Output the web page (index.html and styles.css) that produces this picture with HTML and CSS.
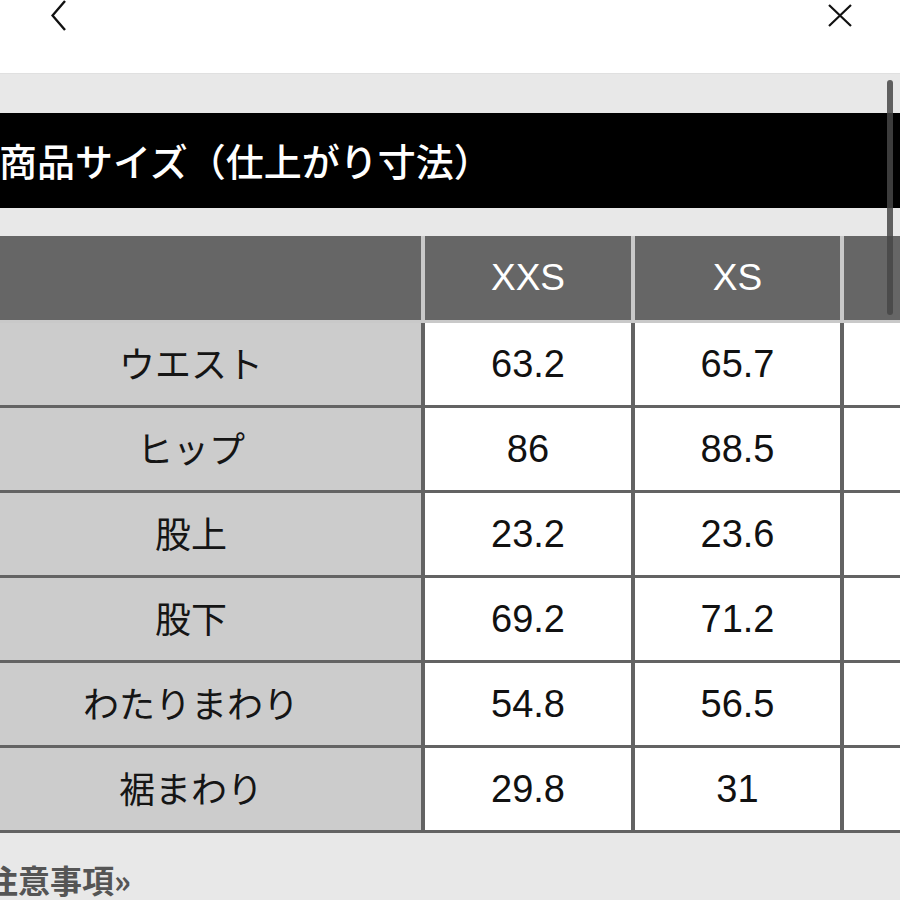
FILE: index.html
```html
<!DOCTYPE html>
<html lang="ja">
<head>
<meta charset="utf-8">
<title>商品サイズ</title>
<link rel="stylesheet" href="styles.css">
</head>
<body>
<header class="topbar">
  <svg class="icon back" width="16" height="32" viewBox="0 0 16 32"><path d="M14 1 L1.5 15.5 L14 30" fill="none" stroke="#111" stroke-width="2.4"/></svg>
  <svg class="icon close" width="26" height="26" viewBox="0 0 26 26"><path d="M2 4 L24 25 M24 4 L2 25" fill="none" stroke="#111" stroke-width="2.2"/></svg>
</header>
<main class="content">
  <h2 class="title">商品サイズ（仕上がり寸法）</h2>
  <table class="size-table">
    <thead>
      <tr><th class="c1"></th><th class="c2">XXS</th><th class="c3">XS</th><th class="c4"></th></tr>
    </thead>
    <tbody>
      <tr><td class="label">ウエスト</td><td>63.2</td><td>65.7</td><td></td></tr>
      <tr><td class="label">ヒップ</td><td>86</td><td>88.5</td><td></td></tr>
      <tr><td class="label">股上</td><td>23.2</td><td>23.6</td><td></td></tr>
      <tr><td class="label">股下</td><td>69.2</td><td>71.2</td><td></td></tr>
      <tr><td class="label">わたりまわり</td><td>54.8</td><td>56.5</td><td></td></tr>
      <tr><td class="label">裾まわり</td><td>29.8</td><td>31</td><td></td></tr>
    </tbody>
  </table>
  <p class="note">注意事項»</p>
</main>
<div class="scrollbar"></div>
</body>
</html>
```
FILE: styles.css
```css
html, body {
  margin: 0;
  padding: 0;
}
body {
  width: 900px;
  height: 900px;
  overflow: hidden;
  background: #e8e8e8;
  font-family: "Noto Sans CJK JP", "Noto Sans", sans-serif;
  position: relative;
}
.topbar {
  height: 73px;
  background: #fff;
  border-bottom: 1px solid #e0e0e0;
  display: flex;
  justify-content: space-between;
  align-items: flex-start;
  padding: 0 47px 0 51px;
}
.icon {
  display: block;
}
.icon.close {
  margin-top: 1px;
}
.content {
  margin-left: -39px;
  width: 1100px;
}
.title {
  margin: 39px 0 0 0;
  height: 95px;
  background: #000;
  color: #fff;
  font-size: 38px;
  font-weight: 500;
  line-height: 93px;
  padding-left: 38px;
  letter-spacing: 0;
}
.size-table {
  margin-top: 28px;
  border-collapse: separate;
  border-spacing: 0;
  table-layout: fixed;
  width: 1092px;
}
.size-table th,
.size-table td {
  box-sizing: border-box;
  padding: 0;
  text-align: center;
  vertical-align: middle;
}
.size-table th {
  height: 87px;
  background: #666;
  color: #fff;
  font-family: "Liberation Sans", Arial, sans-serif;
  font-weight: 400;
  font-size: 37px;
  border-right: 4px solid #c9c9c9;
  border-bottom: 3px solid #c9c9c9;
}
.size-table .c1 { width: 464px; }
.size-table .c2 { width: 210px; }
.size-table .c3 { width: 209px; }
.size-table .c4 { width: 209px; }
.size-table td {
  height: 85px;
  background: #fff;
  color: #111;
  font-family: "Liberation Sans", Arial, sans-serif;
  font-size: 38px;
  border-right: 4px solid #636363;
  border-bottom: 3px solid #636363;
}
.size-table td.label {
  background: #cccccc;
  font-family: "Noto Sans CJK JP", "Noto Sans", sans-serif;
  font-size: 36px;
  color: #151515;
  padding-bottom: 4px;
}
.note {
  margin: 27px 0 0 0;
  padding-left: 25px;
  font-size: 32px;
  line-height: 38px;
  font-weight: 700;
  color: #555;
}
.scrollbar {
  position: absolute;
  left: 887px;
  top: 80px;
  width: 6px;
  height: 235px;
  border-radius: 3px;
  background: rgba(70, 70, 70, 0.85);
}
```
